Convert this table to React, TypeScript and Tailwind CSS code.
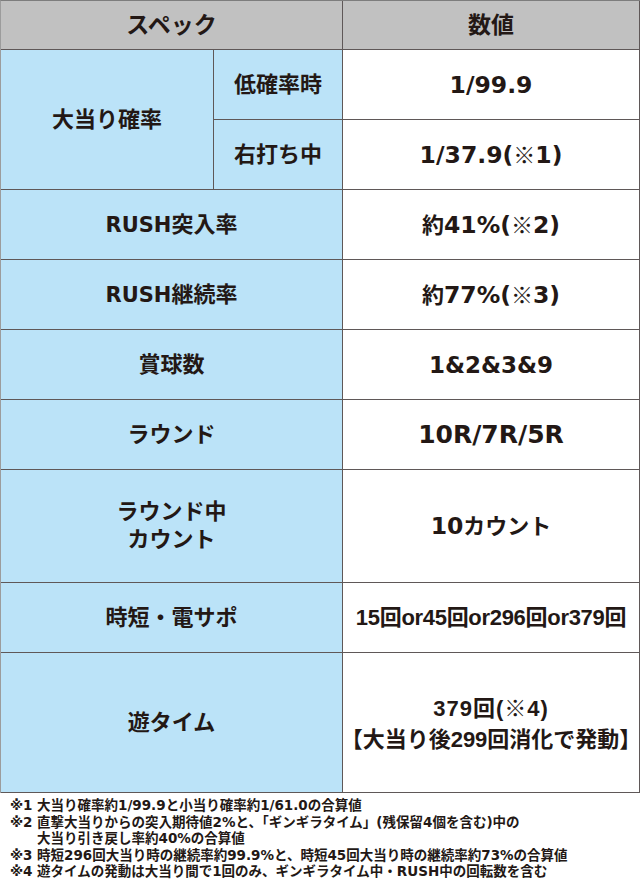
const FONT = {
  fontFamily: '"Liberation Sans", "Noto Sans CJK JP", sans-serif',
};

const label = "flex items-center justify-center bg-[#bbe3f8] border-r border-b border-[#5f5858] text-[22px] leading-[28px] text-center";
const value = "flex items-center justify-center bg-white border-r border-b border-[#5f5858] text-[22px] leading-[28px] text-center";

// wide bold figures, like the print table
function N({ children, size = "text-[23.5px]" }: { children: React.ReactNode; size?: string }) {
  return <span className={`${size} font-['DejaVu_Sans','Noto_Sans_CJK_JP',sans-serif]`}>{children}</span>;
}

function K() {
  return <span className="font-['Noto_Sans_CJK_JP',sans-serif] font-normal">※</span>;
}

const NOTES: { mark: string; lines: string[] }[] = [
  { mark: "※1", lines: ["大当り確率約1/99.9と小当り確率約1/61.0の合算値"] },
  {
    mark: "※2",
    lines: [
      "直撃大当りからの突入期待値2%と、「ギンギラタイム」(残保留4個を含む)中の",
      "大当り引き戻し率約40%の合算値",
    ],
  },
  { mark: "※3", lines: ["時短296回大当り時の継続率約99.9%と、時短45回大当り時の継続率約73%の合算値"] },
  { mark: "※4", lines: ["遊タイムの発動は大当り間で1回のみ、ギンギラタイム中・RUSH中の回転数を含む"] },
];

export default function App() {
  return (
    <div className="w-[640px] h-[885px] bg-white text-[#231815] font-bold" style={FONT}>
      <div className="grid grid-cols-[213px_129px_297px] grid-rows-[49px_70px_70px_70px_70px_70px_70px_113px_70px_140px] border-t border-l border-t-[#7d7d7d] border-l-[#9c9c9c]">
        {/* Header */}
        <div className="col-span-2 flex items-center justify-center bg-[#c1c1c1] border-r border-b border-[#5f5858] text-[23px]">
          スペック
        </div>
        <div className="flex items-center justify-center bg-[#c1c1c1] border-r border-b border-[#5f5858] text-[23px]">
          数値
        </div>

        {/* 大当り確率 */}
        <div className={`${label} row-span-2`}>大当り確率</div>
        <div className={label}>低確率時</div>
        <div className={value}>
          <N>1/99.9</N>
        </div>
        <div className={label}>右打ち中</div>
        <div className={value}>
          <span>
            <N>1/37.9(</N>
            <K />
            <N>1)</N>
          </span>
        </div>

        <div className={`${label} col-span-2`}>
          <span>
            <N size="text-[21px]">RUSH</N>突入率
          </span>
        </div>
        <div className={value}>
          <span>
            約<N>41%(</N>
            <K />
            <N>2)</N>
          </span>
        </div>

        <div className={`${label} col-span-2`}>
          <span>
            <N size="text-[21px]">RUSH</N>継続率
          </span>
        </div>
        <div className={value}>
          <span>
            約<N>77%(</N>
            <K />
            <N>3)</N>
          </span>
        </div>

        <div className={`${label} col-span-2`}>賞球数</div>
        <div className={value}>
          <N size="text-[23px]">1&amp;2&amp;3&amp;9</N>
        </div>

        <div className={`${label} col-span-2`}>ラウンド</div>
        <div className={value}>
          <N size="text-[25px]">10R/7R/5R</N>
        </div>

        <div className={`${label} col-span-2`}>
          <div>
            ラウンド中
            <br />
            カウント
          </div>
        </div>
        <div className={value}>
          <span>
            <N>10</N>カウント
          </span>
        </div>

        <div className={`${label} col-span-2`}>時短・電サポ</div>
        <div className={`${value} text-[16px] tracking-[-0.3px]`}>15回or45回or296回or379回</div>

        <div className={`${label} col-span-2`}>遊タイム</div>
        <div className={`${value} text-[21px] leading-[31px]`}>
          <div className="whitespace-nowrap">
            <div className="tracking-[1px]">
              379回(<K />4)
            </div>
            <div>【大当り後299回消化で発動】</div>
          </div>
        </div>
      </div>

      {/* Footnotes */}
      <div className="pt-[4px] pl-[10px] text-[13.5px] leading-[16.5px] font-['DejaVu_Sans','Noto_Sans_CJK_JP',sans-serif]">
        {NOTES.map((n) => (
          <div key={n.mark} className="flex">
            <span className="w-[27px] shrink-0 whitespace-nowrap">{n.mark}</span>
            <div>
              {n.lines.map((l) => (
                <div key={l} className="whitespace-nowrap">
                  {l}
                </div>
              ))}
            </div>
          </div>
        ))}
      </div>
    </div>
  );
}
